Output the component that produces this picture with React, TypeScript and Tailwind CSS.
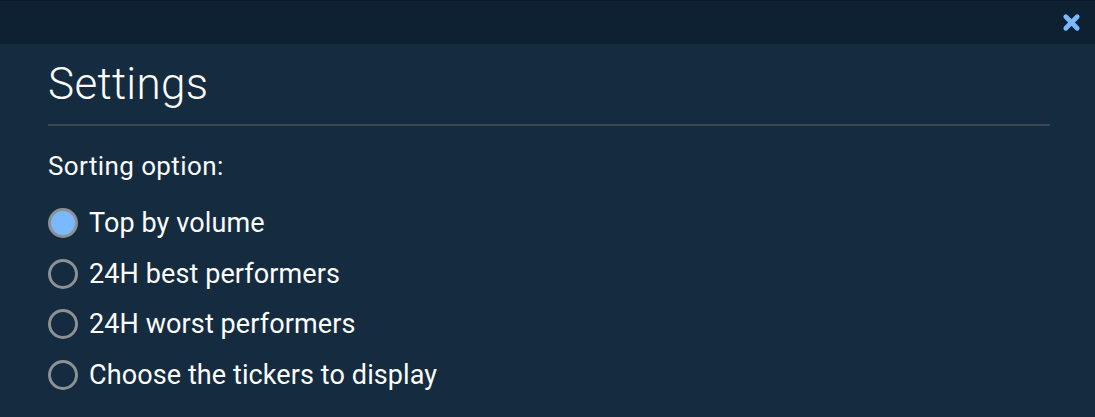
export default function App() {
  const options = [
    "Top by volume",
    "24H best performers",
    "24H worst performers",
    "Choose the tickers to display",
  ];
  return (
    <div
      className="h-[417px] w-[1095px] overflow-hidden bg-[#142b40] text-white"
      style={{ fontFamily: "Roboto, 'Noto Sans', sans-serif" }}
    >
      {/* Header bar */}
      <div className="flex h-[44px] items-center justify-end border-t border-[#0a1a28] bg-[#0d2133] pr-[14px]">
        <svg width="19" height="19" viewBox="0 0 20 20" aria-hidden>
          <path
            d="M4 4 L16 16 M16 4 L4 16"
            stroke="#7ab8ff"
            strokeWidth="5"
            strokeLinecap="round"
          />
        </svg>
      </div>

      <div className="px-[48px] pr-[45px]">
        <h1 className="pt-[14px] text-[44px] font-light leading-[52px] tracking-[0.3px]">
          Settings
        </h1>
        <div className="mt-[14px] h-[2px] bg-[#3b4752]" />

        <p className="mt-[24px] text-[26px] leading-[32px] tracking-[0.4px]">Sorting option:</p>

        <div className="mt-[26px] flex flex-col gap-[20.5px]">
          {options.map((o, i) => (
            <label key={o} className="flex h-[30px] items-center gap-[11px]">
              <span
                className={
                  i === 0
                    ? "box-border h-[30px] w-[30px] rounded-full border-[3px] border-[#8c9196] bg-[#7bb8ff]"
                    : "box-border h-[30px] w-[30px] rounded-full border-[3px] border-[#8c9196]"
                }
              />
              <span className="text-[27px] leading-[30px] tracking-[0.1px]">{o}</span>
            </label>
          ))}
        </div>
      </div>
    </div>
  );
}
